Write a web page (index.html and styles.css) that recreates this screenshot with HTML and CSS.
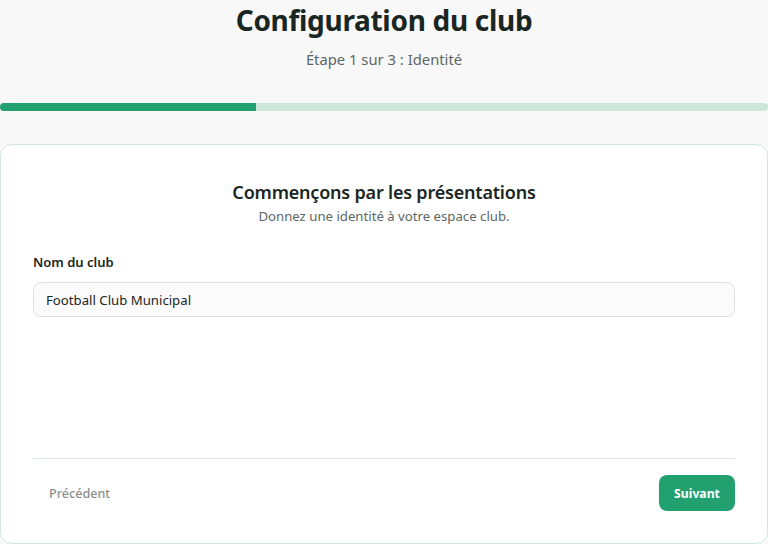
FILE: index.html
```html
<!DOCTYPE html>
<html lang="fr">
<head>
<meta charset="utf-8">
<title>Configuration du club</title>
<link rel="stylesheet" href="styles.css">
</head>
<body>
<div class="page">
  <header class="header">
    <h1 class="title">Configuration du club</h1>
    <p class="step">Étape 1 sur 3 : Identité</p>
  </header>
  <div class="progress"><div class="progress-fill" style="width:33.33%"></div></div>
  <section class="card">
    <div class="card-head">
      <h2 class="card-title">Commençons par les présentations</h2>
      <p class="card-sub">Donnez une identité à votre espace club.</p>
    </div>
    <div class="field">
      <label class="label" for="club">Nom du club</label>
      <input class="input" id="club" type="text" value="Football Club Municipal">
    </div>
    <div class="actions">
      <button class="btn-prev" type="button">Précédent</button>
      <button class="btn-next" type="button">Suivant</button>
    </div>
  </section>
</div>
</body>
</html>
```

FILE: styles.css
```css
* { box-sizing: border-box; }
html, body { margin: 0; padding: 0; }
body {
  background: #f8f8f8;
  font-family: "Noto Sans", "Open Sans", sans-serif;
  color: #1c2a26;
  width: 768px;
  height: 544px;
  overflow: hidden;
}
.page { display: flex; flex-direction: column; }
.header { display: flex; flex-direction: column; align-items: center; padding-top: 0; }
.title {
  margin: 0;
  font-size: 28px;
  font-weight: 700;
  line-height: 40px;
  color: #1a2622;
  letter-spacing: -0.3px;
}
.step {
  margin: 8px 0 0;
  font-size: 14.8px;
  line-height: 22px;
  color: #5d6764;
}
.progress {
  margin-top: 33px;
  height: 8px;
  border-radius: 4px;
  background: #cde6dc;
  overflow: hidden;
}
.progress-fill { height: 100%; background: #23a06f; }
.card {
  margin-top: 33px;
  background: #fff;
  border: 1px solid #d3e7e0;
  border-radius: 12px;
  padding: 34px 32px 32px;
  height: 400px;
  display: flex;
  flex-direction: column;
}
.card-head { display: flex; flex-direction: column; align-items: center; }
.card-title { margin: 0; font-size: 18px; font-weight: 600; line-height: 26px; color: #1a2622; letter-spacing: -0.2px; }
.card-sub { margin: 2px 0 0; font-size: 13.2px; line-height: 18px; color: #5d6764; }
.field { display: flex; flex-direction: column; margin-top: 28px; }
.label { font-size: 13px; font-weight: 600; line-height: 18px; color: #1a2622; }
.input {
  margin-top: 11px;
  height: 35px;
  border: 1px solid #dde2e0;
  border-radius: 8px;
  background: #fbfbfb;
  padding: 0 12px;
  font: 13.2px "Noto Sans", sans-serif;
  color: #1a2622;
}
.actions {
  margin-top: auto;
  border-top: 1px solid #dde6e3;
  padding-top: 16px;
  display: flex;
  justify-content: space-between;
  align-items: center;
}
.btn-prev {
  background: none;
  border: 0;
  padding: 0 16px;
  font: 500 12.6px "Noto Sans", sans-serif;
  color: #8a908e;
}
.btn-next {
  background: #23a06f;
  color: #fff;
  border: 0;
  border-radius: 8px;
  height: 36px;
  width: 76px;
  padding: 0;
  font: 700 12.2px "Noto Sans", sans-serif;
}
```
